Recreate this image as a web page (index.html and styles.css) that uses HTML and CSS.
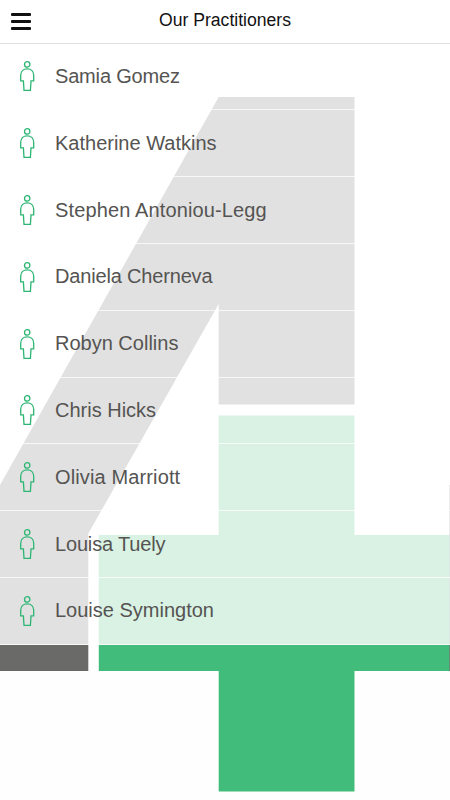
FILE: index.html
```
<!DOCTYPE html>
<html lang="en">
<head>
	<meta charset="UTF-8">
	<title>Our Practitioners</title>
	<link rel="stylesheet" href="styles.css">
</head>
<body>
	<svg class="backdrop" viewBox="0 0 450 800">
		<path class="grey" d="M218.7 97H354.5V404.5H218.7V304L88.3 533.5V671H0V485Z"/>
		<path class="green" d="M218.7 415.5H354.5V535H450V671H354.5V791.5H218.7V671H98.8V535H218.7Z"/>
		<path class="edge" d="M449.3 485H450V671H449.3Z"/>
	</svg>
	<svg class="symbols">
		<symbol id="person" viewBox="0 0 16 32">
			<circle cx="8.2" cy="4.4" r="2.7"/>
			<path d="M8.2 8.9C4.2 8.9 1.7 11.6 1.7 15.2V20.9H4.4L5 30.3H11.4L12 20.9H14.7V15.2C14.7 11.6 12.2 8.9 8.2 8.9Z"/>
		</symbol>
	</svg>
	<header class="topbar">
		<button class="menu" aria-label="Menu">
			<span></span>
			<span></span>
			<span></span>
		</button>
		<h1>Our Practitioners</h1>
	</header>
	<ul class="people">
		<li><svg class="person"><use href="#person"/></svg><span class="tight">Samia Gomez</span></li>
		<li><svg class="person"><use href="#person"/></svg><span>Katherine Watkins</span></li>
		<li><svg class="person"><use href="#person"/></svg><span class="loose">Stephen Antoniou-Legg</span></li>
		<li><svg class="person"><use href="#person"/></svg><span class="tight">Daniela Cherneva</span></li>
		<li><svg class="person"><use href="#person"/></svg><span>Robyn Collins</span></li>
		<li><svg class="person"><use href="#person"/></svg><span>Chris Hicks</span></li>
		<li><svg class="person"><use href="#person"/></svg><span class="loose">Olivia Marriott</span></li>
		<li><svg class="person"><use href="#person"/></svg><span class="tight">Louisa Tuely</span></li>
		<li><svg class="person"><use href="#person"/></svg><span>Louise Symington</span></li>
	</ul>
</body>
</html>
```

FILE: styles.css
```
* {margin: 0;padding: 0;box-sizing: border-box;}
body {
	height: 800px;
	overflow: hidden;
	background: #fefefe;
	font-family: "Helvetica Neue", "Liberation Sans", Arial, sans-serif;
}
.backdrop {width: 450px;height: 800px;position: absolute;top: 0;left: 0;z-index: -1;}
.grey {fill: #6a6a69;}
.green {fill: #42bc7a;}
.edge {fill: #777;}
.symbols {display: none;}
.topbar {
	display: grid;
	grid-template-columns: 43px 1fr 43px;
	align-items: center;
	height: 43.6px;
	padding-bottom: 3px;
	background: #fff;
	border-bottom: 1px solid #e0e0e0;
}
.menu {
	display: flex;
	flex-direction: column;
	gap: 4px;
	width: 20px;
	margin: 3px 0 0 11px;
	border: 0;
	background: none;
}
.menu span {width: 20px;height: 3px;border-radius: 1px;background: #111;}
.topbar h1 {font-size: 17.6px;font-weight: normal;line-height: 20px;text-align: center;color: #111;}
.people {list-style: none;}
.people li {
	display: flex;
	align-items: center;
	gap: 20px;
	height: 66.8px;
	padding-left: 19px;
	background: rgba(255, 255, 255, 0.8);
	background-clip: padding-box;
	border-bottom: 1px solid rgba(255, 255, 255, 0.95);
	font-size: 20px;
	color: #555452;
}
.tight {letter-spacing: -0.17px;}
.loose {letter-spacing: 0.13px;}
.person {width: 16px;height: 32px;fill: none;stroke: #2cb673;stroke-width: 1.3;}
```
